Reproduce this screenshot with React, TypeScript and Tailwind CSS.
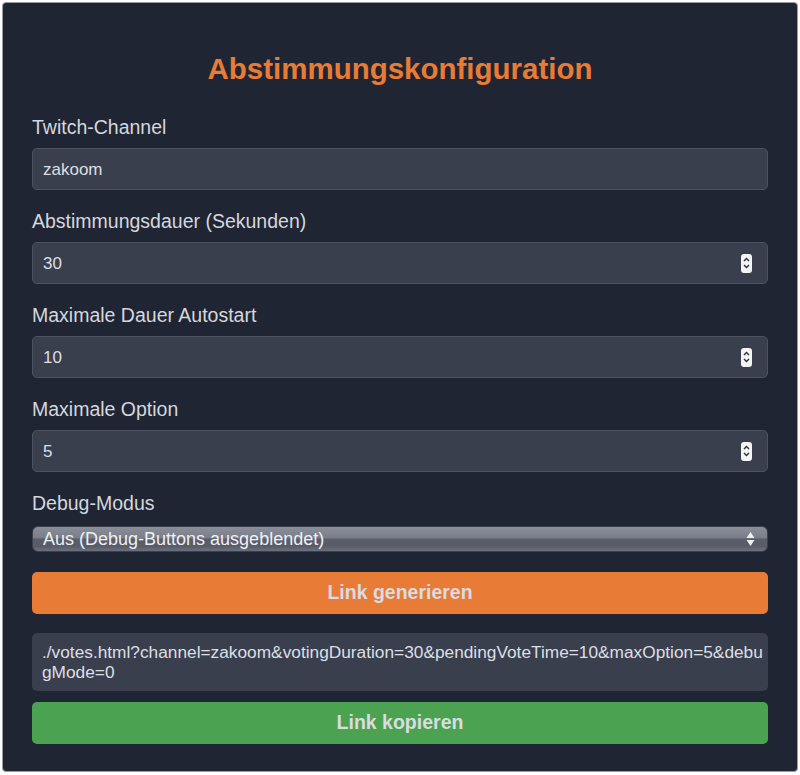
const fields = [
  { label: "Twitch-Channel", value: "zakoom", spinner: false },
  { label: "Abstimmungsdauer (Sekunden)", value: "30", spinner: true },
  { label: "Maximale Dauer Autostart", value: "10", spinner: true },
  { label: "Maximale Option", value: "5", spinner: true },
]

function Spinner() {
  return (
    <div className="flex h-[19px] w-[11px] flex-col items-center justify-center rounded-[3px] bg-[#f4f4f5]">
      <svg width="7" height="5" viewBox="0 0 7 5" className="mb-[2px]">
        <path d="M1 4 L3.5 1.5 L6 4" fill="none" stroke="#2b2f38" strokeWidth="1.4" />
      </svg>
      <svg width="7" height="5" viewBox="0 0 7 5">
        <path d="M1 1 L3.5 3.5 L6 1" fill="none" stroke="#2b2f38" strokeWidth="1.4" />
      </svg>
    </div>
  )
}

export default function App() {
  return (
    <div className="min-h-screen bg-white pl-[2px] pt-[2px] font-['Liberation_Sans',Arial,sans-serif]">
      <div className="w-[796px] rounded-[4px] border border-[#9a9ca2] bg-[#202533] px-[29px] pb-[27px] pt-[49px]">
        <h1 className="mb-[30px] text-center text-[29.5px] font-bold leading-[34px] text-[#e87b35]">
          Abstimmungskonfiguration
        </h1>

        {fields.map((f) => (
          <div key={f.label} className="mb-[20px]">
            <label className="block text-[19.5px] leading-[22px] text-[#d4d7dd]">{f.label}</label>
            <div className="mt-[10px] flex h-[42px] items-center justify-between rounded-[5px] border border-[#4d5262] bg-[#3a3f4e] pl-[10px] pr-[15px]">
              <span className="pt-[2px] text-[17px] text-[#dcdfe4]">{f.value}</span>
              {f.spinner && <Spinner />}
            </div>
          </div>
        ))}

        <label className="block text-[19.5px] leading-[22px] text-[#d4d7dd]">Debug-Modus</label>
        <div className="relative mt-[12px] flex h-[26px] items-center overflow-hidden rounded-[6px] border border-[#3c404b] bg-[linear-gradient(to_bottom,#8a8e99_0%,#7a7e89_45%,#5a5e6b_50%,#585c69_80%,#6d717d_100%)] pl-[10px] pr-[12px]">
          <span className="text-[18px] leading-[20px] text-[#eef0f3]">Aus (Debug-Buttons ausgeblendet)</span>
          <div className="ml-auto flex flex-col items-center gap-[2px]">
            <svg width="9" height="6" viewBox="0 0 9 6">
              <path d="M0.5 6 L4.5 0 L8.5 6 Z" fill="#eef0f3" />
            </svg>
            <svg width="9" height="6" viewBox="0 0 9 6">
              <path d="M0.5 0 L4.5 6 L8.5 0 Z" fill="#eef0f3" />
            </svg>
          </div>
        </div>

        <button className="mt-[20px] flex h-[42px] w-full items-center justify-center rounded-[5px] bg-[#e87b35] text-[19.5px] font-bold text-[#d9dce1]">
          Link generieren
        </button>

        <div className="mt-[19px] rounded-[5px] bg-[#3a3f4e] py-[9px] pl-[10px] pr-[3px] text-[17.3px] leading-[20px] text-[#dcdfe4] break-all">
          ./votes.html?channel=zakoom&amp;votingDuration=30&amp;pendingVoteTime=10&amp;maxOption=5&amp;debugMode=0
        </div>

        <button className="mt-[11px] flex h-[42px] w-full items-center justify-center rounded-[5px] bg-[#4ba352] text-[19.5px] font-bold text-[#d9dce1]">
          Link kopieren
        </button>
      </div>
    </div>
  )
}
